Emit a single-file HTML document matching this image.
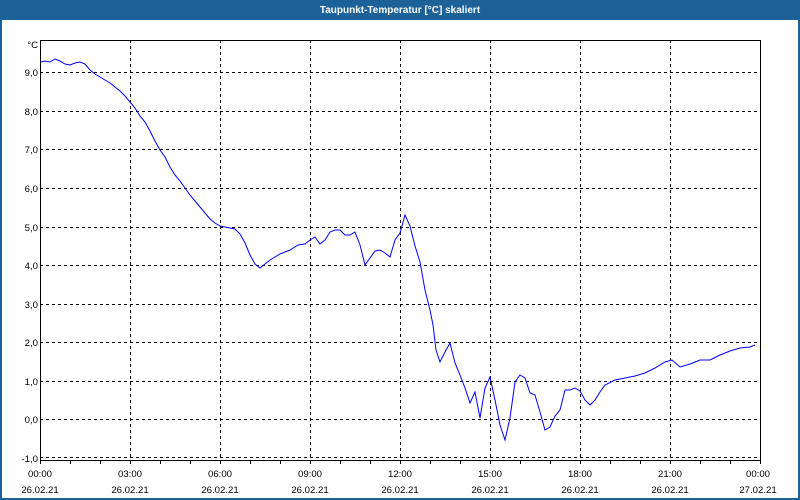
<!DOCTYPE html>
<html><head><meta charset="utf-8"><style>
html,body{margin:0;padding:0;width:800px;height:500px;overflow:hidden;background:#fff}
</style></head><body>
<svg width="800" height="500" xmlns="http://www.w3.org/2000/svg" font-family="'Liberation Sans', sans-serif" font-size="9.6">
<rect x="0" y="0" width="800" height="500" fill="#1c6198"/>
<rect x="2" y="20" width="796" height="478" fill="#fff"/>
<text x="400" y="13" fill="#fff" font-weight="bold" text-anchor="middle" font-size="10">Taupunkt-Temperatur [°C] skaliert</text>
<g stroke="#000" stroke-width="1" stroke-dasharray="3,3" fill="none">
<path d="M130.5 40V460M220.5 40V460M310.5 40V460M400.5 40V460M490.5 40V460M580.5 40V460M670.5 40V460"/>
<path d="M40 72.5H760M40 111.5H760M40 149.5H760M40 188.5H760M40 227.5H760M40 265.5H760M40 304.5H760M40 342.5H760M40 381.5H760M40 419.5H760M40 457.5H760"/>
</g>
<g stroke="#000" stroke-width="1" fill="none">
<path d="M40.5 40V464M40 40.5H760.5M760.5 40V464M40 460.5H761"/>
<path d="M70.5 460V464M100.5 460V464M130.5 460V464M160.5 460V464M190.5 460V464M220.5 460V464M250.5 460V464M280.5 460V464M310.5 460V464M340.5 460V464M370.5 460V464M400.5 460V464M430.5 460V464M460.5 460V464M490.5 460V464M520.5 460V464M550.5 460V464M580.5 460V464M610.5 460V464M640.5 460V464M670.5 460V464M700.5 460V464M730.5 460V464"/>
</g>
<g fill="#000" text-anchor="end">
<text x="38" y="48">°C</text>
<text x="38" y="76">9,0</text><text x="38" y="115">8,0</text><text x="38" y="153">7,0</text><text x="38" y="192">6,0</text><text x="38" y="231">5,0</text><text x="38" y="269">4,0</text><text x="38" y="308">3,0</text><text x="38" y="346">2,0</text><text x="38" y="385">1,0</text><text x="38" y="423">0,0</text><text x="38" y="462">-1,0</text>
</g>
<g fill="#000" text-anchor="middle">
<text x="40" y="477">00:00</text><text x="40" y="493">26.02.21</text>
<text x="130" y="477">03:00</text><text x="130" y="493">26.02.21</text>
<text x="220" y="477">06:00</text><text x="220" y="493">26.02.21</text>
<text x="310" y="477">09:00</text><text x="310" y="493">26.02.21</text>
<text x="400" y="477">12:00</text><text x="400" y="493">26.02.21</text>
<text x="490" y="477">15:00</text><text x="490" y="493">26.02.21</text>
<text x="580" y="477">18:00</text><text x="580" y="493">26.02.21</text>
<text x="670" y="477">21:00</text><text x="670" y="493">26.02.21</text>
<text x="758" y="477">00:00</text><text x="758" y="493">27.02.21</text>
</g>
<polyline fill="none" stroke="#0000ff" stroke-width="1" points="41,62 45,61 50,62 55,59 60,61 65,64 70,65 75,63 80,62 85,64 90,70 95,74 100,77 105,80 110,83 115,87 120,91 125,96 130,102 135,108 140,116 145,122 150,131 155,141 160,150 165,157 170,167 175,175 180,181 185,188 190,195 195,201 200,207 205,213 210,219 215,223 220,226 225,227 230,228 235,229 240,234 245,243 250,255 255,264 260,268 265,264 270,260 280,254 290,250 298,245 305,244 310,240 315,237 320,244 325,240 330,232 335,230 340,230 345,235 350,235 355,232 360,245 365,265 370,258 375,251 380,250 385,253 390,257 395,240 400,233 405,215 410,226 415,246 420,262 425,290 430,310 433,325 436,350 440,362 445,352 450,343 455,363 460,375 465,388 470,403 475,392 480,418 485,388 490,377 495,400 500,425 505,440 510,418 515,382 520,375 525,378 530,393 535,395 540,412 545,430 550,427 555,416 560,410 565,390 570,390 575,388 580,391 585,400 590,405 595,400 600,392 605,385 615,380 625,378 635,376 645,373 655,368 665,362 672,360 680,367 690,364 700,360 710,360 720,355 730,351 740,348 750,347 755,345"/>
</svg>
</body></html>
